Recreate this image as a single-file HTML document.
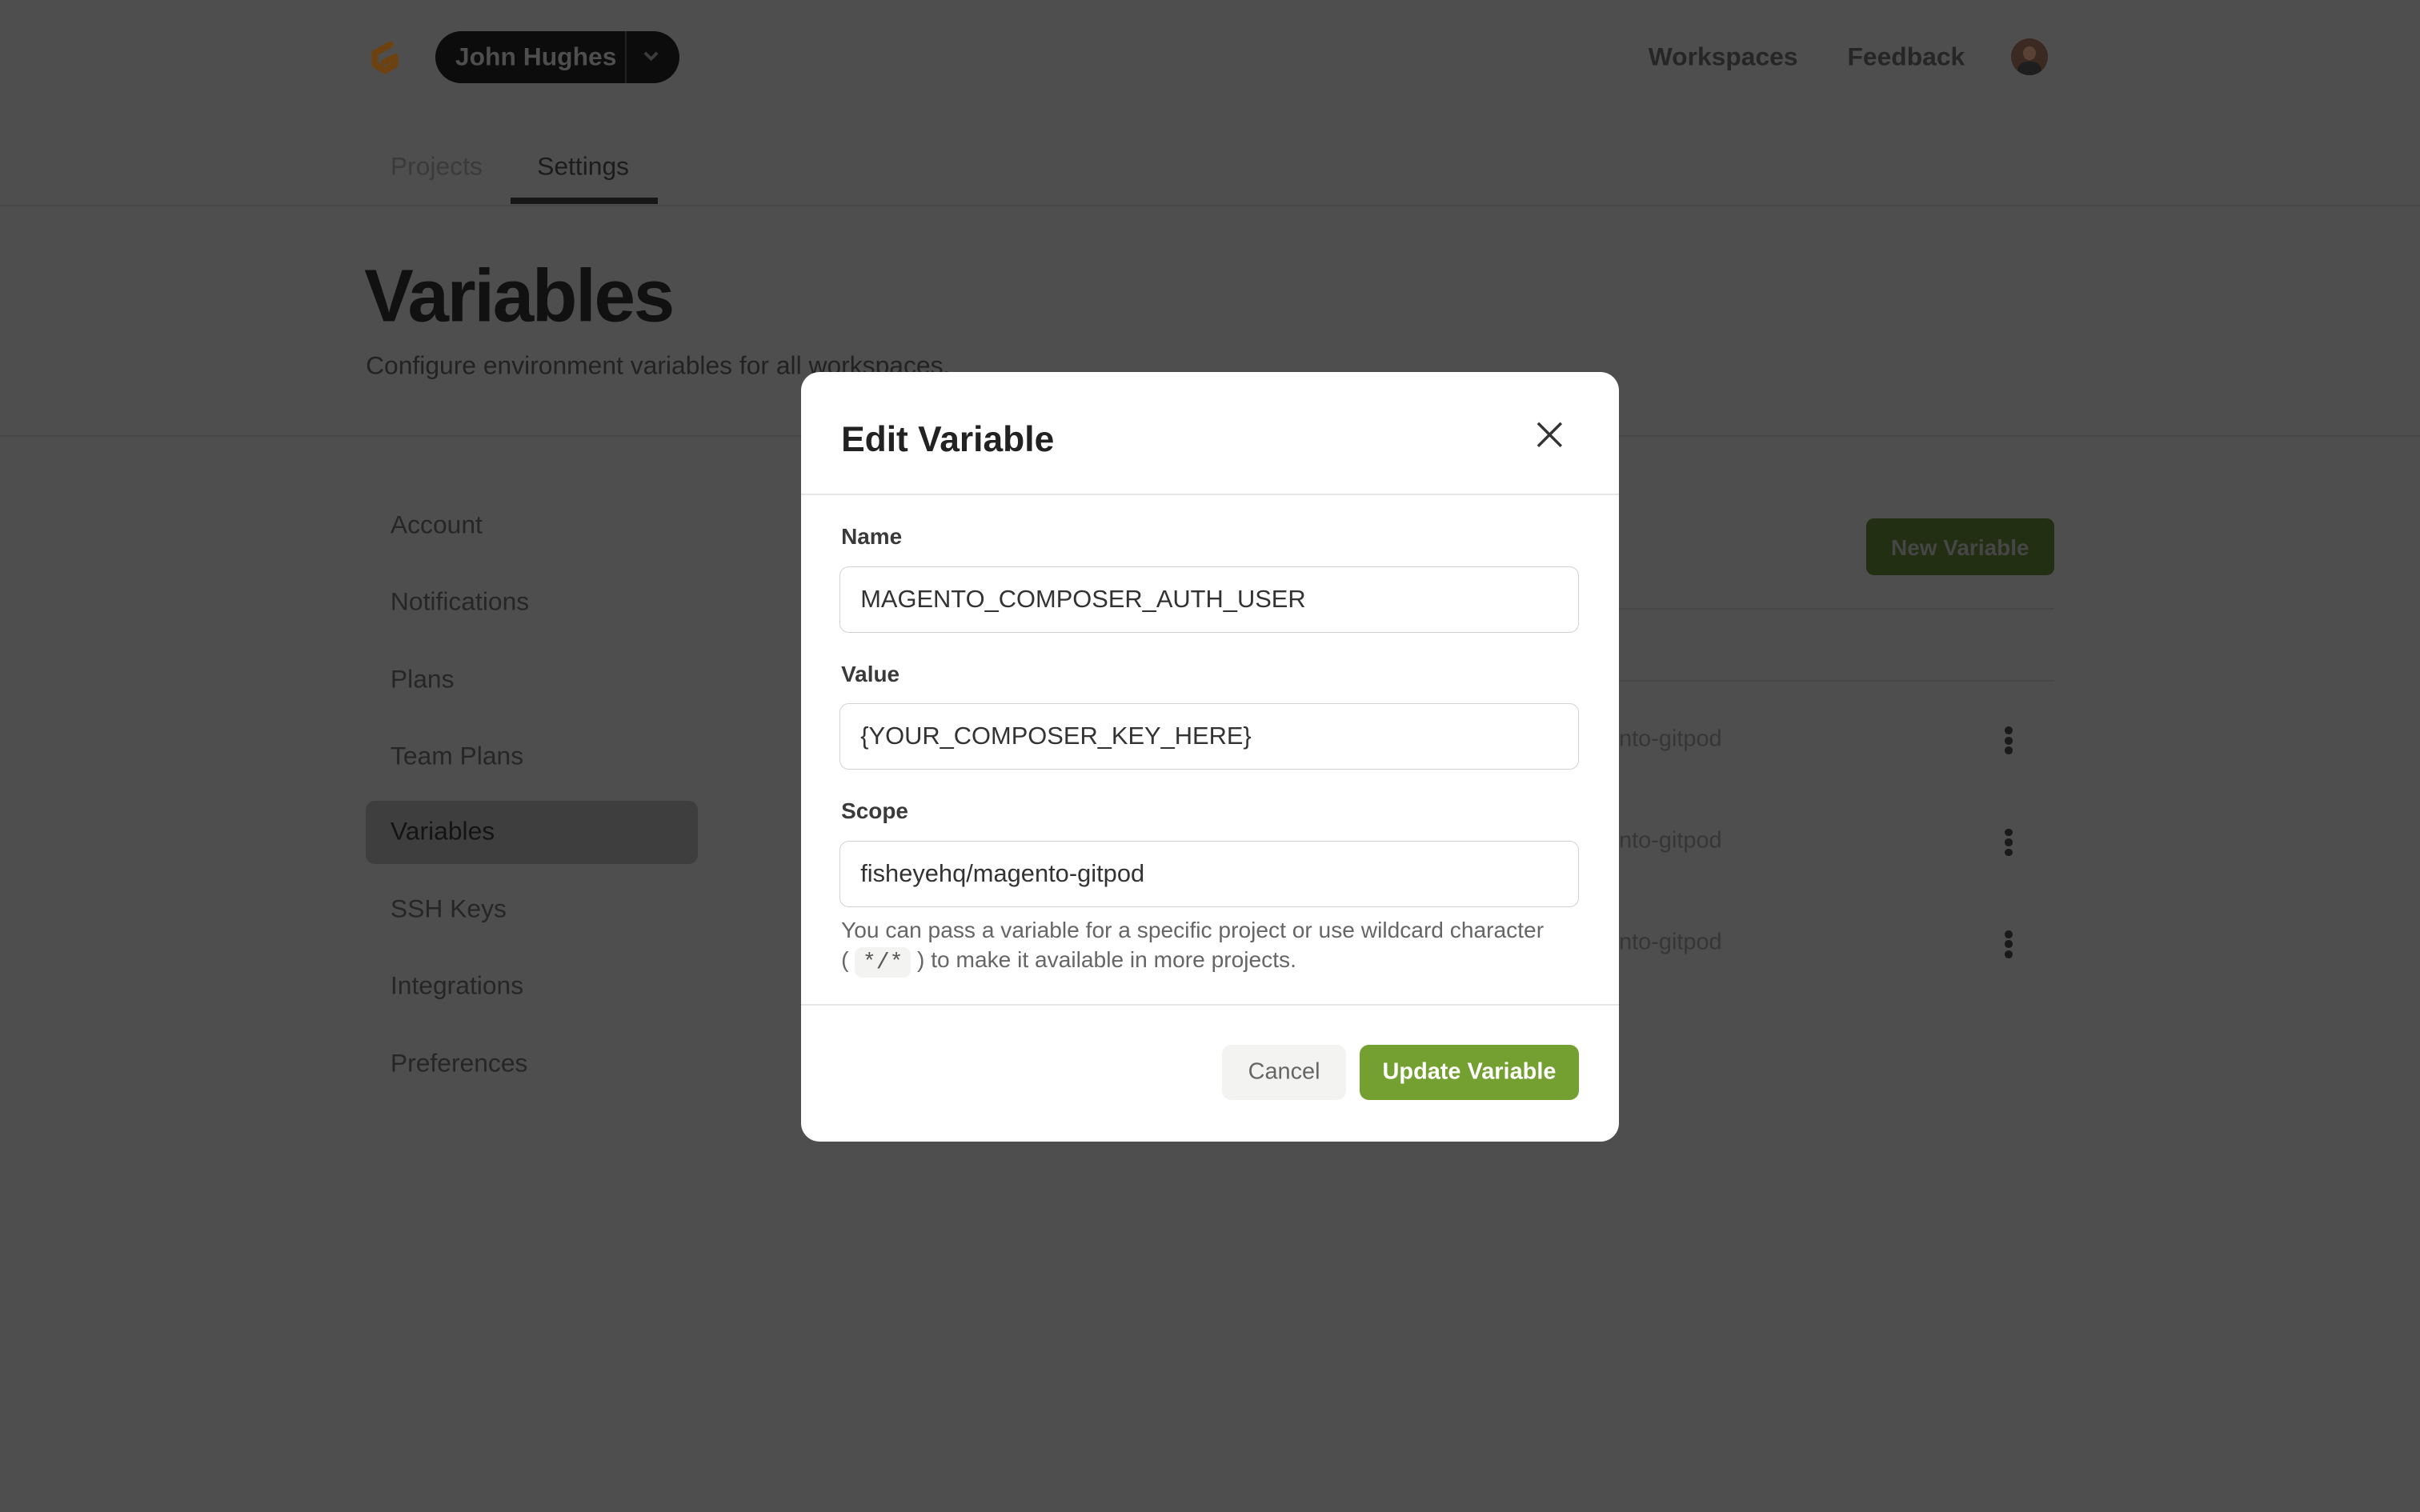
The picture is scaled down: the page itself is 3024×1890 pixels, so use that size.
<!DOCTYPE html>
<html><head><meta charset="utf-8">
<style>
html,body{margin:0;padding:0;background:#4e4e4e;overflow:hidden}
#w{zoom:1.928571;width:1568px;height:980px;position:relative;font-family:"Liberation Sans",sans-serif;background:#4e4e4e}
.a{position:absolute;white-space:nowrap}
.line{position:absolute;height:1px;background:#464646}
.side{position:absolute;left:253px;font-size:16.5px;color:#262626;transform:translateY(-50%)}
.lab{position:absolute;left:545px;font-size:14.5px;font-weight:bold;color:#3a3a3a;transform:translateY(-50%)}
.inp{position:absolute;left:544px;width:479px;height:43px;border:1px solid #d2d2d2;border-radius:6px;box-sizing:border-box;font-size:16px;color:#333;line-height:41px;padding-left:13px;background:#fff}
.dots{position:absolute;left:1299px;width:6px}
.dots i{display:block;width:5px;height:5px;border-radius:50%;background:#1a1a1a;margin-bottom:1.5px}
.row{position:absolute;left:1049px;font-size:15px;color:#363636;transform:translateY(-50%)}
</style></head><body><div id="w">
<svg class="a" style="left:236px;top:24px" width="27" height="27" viewBox="0 0 27 27"><path d="M17 5 L7 10.5 V18 L13.5 22 L20 18 V13 L13 16.5" fill="none" stroke="#6e4210" stroke-width="4.2" stroke-linecap="round" stroke-linejoin="round"/></svg>
<div class="a" style="left:282px;top:20px;width:158px;height:34px;border-radius:17px;background:#0c0c0c"></div>
<div class="a" style="left:405px;top:20px;width:1px;height:34px;background:#222"></div>
<div class="a" style="left:295px;top:37px;transform:translateY(-50%);font-size:16.5px;font-weight:bold;color:#4e4e4e">John Hughes</div>
<svg class="a" style="left:416px;top:32px" width="12" height="9" viewBox="0 0 12 9"><path d="M2 2 L6 6 L10 2" fill="none" stroke="#3c3c3c" stroke-width="2"/></svg>
<div class="a" style="left:1068px;top:37px;transform:translateY(-50%);font-size:16.5px;font-weight:bold;color:#262626">Workspaces</div>
<div class="a" style="left:1197px;top:37px;transform:translateY(-50%);font-size:16.5px;font-weight:bold;color:#262626">Feedback</div>
<div class="a" style="left:1303px;top:25px;width:24px;height:24px;border-radius:50%;background:#3a2a22;overflow:hidden"><div style="position:absolute;left:8px;top:5px;width:8px;height:9px;border-radius:50%;background:#5a4336"></div><div style="position:absolute;left:4px;top:15px;width:16px;height:12px;border-radius:6px 6px 0 0;background:#1e1e1e"></div></div>
<div class="a" style="left:253px;top:108px;transform:translateY(-50%);font-size:16.5px;color:#3a3a3a">Projects</div>
<div class="a" style="left:348px;top:108px;transform:translateY(-50%);font-size:16.5px;color:#1c1c1c">Settings</div>
<div class="a" style="left:331px;top:128px;width:95px;height:4px;background:#161616"></div>
<div class="line" style="left:0;top:133px;width:1568px"></div>
<div class="a" style="left:236px;top:192px;transform:translateY(-50%);font-size:48px;font-weight:bold;letter-spacing:-1.2px;color:#111">Variables</div>
<div class="a" style="left:237px;top:237px;transform:translateY(-50%);font-size:16.5px;color:#222">Configure environment variables for all workspaces.</div>
<div class="line" style="left:0;top:282px;width:1568px"></div>
<div class="a" style="left:237px;top:519px;width:215px;height:41px;border-radius:6px;background:#3e3e3e"></div>
<div class="side" style="top:340px">Account</div>
<div class="side" style="top:390px">Notifications</div>
<div class="side" style="top:440px">Plans</div>
<div class="side" style="top:490px">Team Plans</div>
<div class="side" style="top:539px;color:#141414">Variables</div>
<div class="side" style="top:589px">SSH Keys</div>
<div class="side" style="top:639px">Integrations</div>
<div class="side" style="top:689px">Preferences</div>
<div class="a" style="left:1209px;top:336px;width:122px;height:37px;border-radius:5px;background:#232f12"></div>
<div class="a" style="left:1270px;top:355px;transform:translate(-50%,-50%);font-size:14.5px;font-weight:bold;color:#464646">New Variable</div>
<div class="line" style="left:1040px;top:394px;width:291px"></div>
<div class="line" style="left:1040px;top:441px;width:291px"></div>
<div class="row" style="top:479px">nto-gitpod</div>
<div class="row" style="top:545px">nto-gitpod</div>
<div class="row" style="top:611px">nto-gitpod</div>
<div class="dots" style="top:471px"><i></i><i></i><i></i></div>
<div class="dots" style="top:537px"><i></i><i></i><i></i></div>
<div class="dots" style="top:603px"><i></i><i></i><i></i></div>
<div class="a" style="left:519px;top:241px;width:530px;height:499px;background:#fff;border-radius:12px"></div>
<div class="a" style="left:545px;top:285px;transform:translateY(-50%);font-size:23px;font-weight:bold;color:#222">Edit Variable</div>
<svg class="a" style="left:995px;top:273px" width="18" height="18" viewBox="0 0 18 18"><path d="M1.5 1.5 L16.5 16.5 M16.5 1.5 L1.5 16.5" stroke="#333" stroke-width="1.8"/></svg>
<div class="a" style="left:519px;top:320px;width:530px;height:1px;background:#e6e6e6"></div>
<div class="lab" style="top:348px">Name</div>
<div class="inp" style="top:367px">MAGENTO_COMPOSER_AUTH_USER</div>
<div class="lab" style="top:437px">Value</div>
<div class="inp" style="top:456px">{YOUR_COMPOSER_KEY_HERE}</div>
<div class="lab" style="top:526px">Scope</div>
<div class="inp" style="top:545px">fisheyehq/magento-gitpod</div>
<div class="a" style="left:545px;top:603px;transform:translateY(-50%);font-size:14.6px;color:#666">You can pass a variable for a specific project or use wildcard character</div>
<div class="a" style="left:545px;top:623px;transform:translateY(-50%);font-size:14.6px;color:#666">( <span style="background:#f3f3f2;border-radius:5px;padding:2px 5px;font-family:'Liberation Mono',monospace;color:#555">*/*</span> ) to make it available in more projects.</div>
<div class="a" style="left:519px;top:651px;width:530px;height:1px;background:#e6e6e6"></div>
<div class="a" style="left:792px;top:677px;width:80px;height:36px;border-radius:6px;background:#f3f3f1"></div>
<div class="a" style="left:832px;top:695px;transform:translate(-50%,-50%);font-size:15px;color:#666">Cancel</div>
<div class="a" style="left:881px;top:677px;width:142px;height:36px;border-radius:6px;background:#74a032"></div>
<div class="a" style="left:952px;top:695px;transform:translate(-50%,-50%);font-size:15px;font-weight:bold;color:#fff">Update Variable</div>
</div></body></html>
